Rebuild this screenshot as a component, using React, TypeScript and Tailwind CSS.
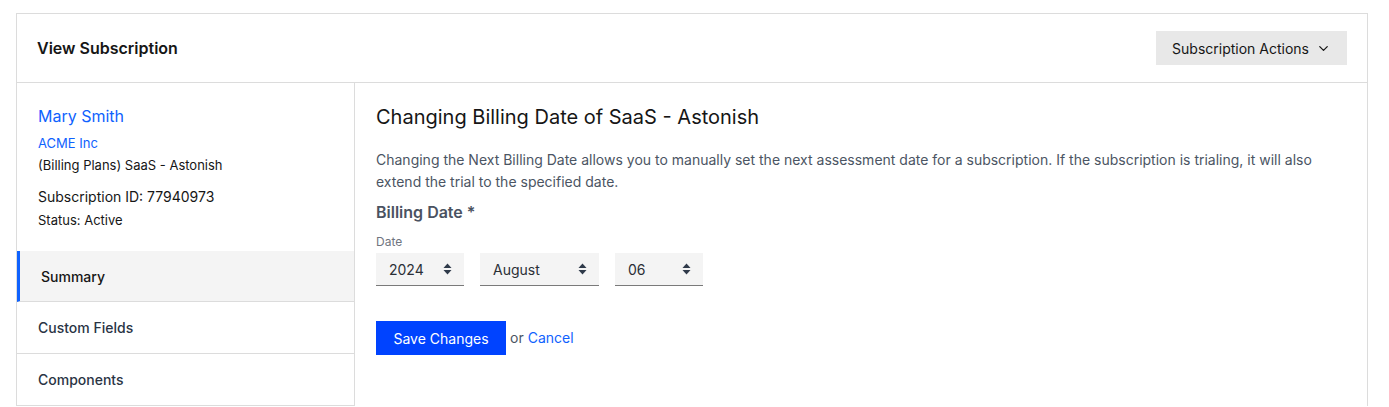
import { ChevronDown } from "lucide-react"

function SelectBox({ value, width }: { value: string; width: string }) {
  return (
    <div className={`flex h-[33px] items-center justify-between border-b border-[#7a7a7a] bg-[#f4f4f4] pl-[13px] pr-[12px] ${width}`}>
      <span className="text-[14px] text-[#2b2f36]">{value}</span>
      <svg width="9" height="12" viewBox="0 0 9 12" className="text-[#2f3a4a]">
        <path d="M4.5 0.5 L8.5 5 H0.5 Z" fill="currentColor" />
        <path d="M4.5 11.5 L8.5 7 H0.5 Z" fill="currentColor" />
      </svg>
    </div>
  )
}

export default function App() {
  const navItems = ["Summary", "Custom Fields", "Components"]

  return (
    <div className="min-h-[407px] bg-white pl-4 pr-[21px] pt-[13px]" style={{ fontFamily: "Inter, 'Noto Sans', sans-serif" }}>
      <div className="border border-b-0 border-[#dcdcdc]">
        {/* header */}
        <div className="flex h-[69px] items-center justify-between border-b border-[#dcdcdc] pl-[20px] pr-[20px]">
          <h1 className="text-[16px] font-semibold text-[#161616]">View Subscription</h1>
          <button className="flex h-[34px] items-center gap-[7px] bg-[#e8e8e8] pl-[16px] pr-[16px] text-[14px] text-[#161616]">
            Subscription Actions
            <ChevronDown className="h-[15px] w-[15px]" strokeWidth={2} />
          </button>
        </div>

        <div className="flex">
          {/* sidebar */}
          <div className="w-[338px] shrink-0 border-r border-[#dcdcdc]">
            <div className="pb-[21px] pl-[21px] pt-[21px]">
              <div className="text-[16px] leading-[24px] text-[#0f62fe]">Mary Smith</div>
              <div className="mt-[5px] text-[13px] leading-[20px] text-[#0f62fe]">ACME Inc</div>
              <div className="mt-[2px] text-[13px] leading-[20px] text-[#161616]">(Billing Plans) SaaS - Astonish</div>
              <div className="mt-[12px] text-[14px] leading-[20px] text-[#161616]">Subscription ID: 77940973</div>
              <div className="mt-[3px] text-[13px] leading-[20px] text-[#161616]">Status: Active</div>
            </div>
            {navItems.map((item, i) => (
              <div
                key={item}
                className={
                  i === 0
                    ? "flex h-[51px] items-center border-b border-l-[3px] border-b-[#dcdcdc] border-l-[#0f62fe] bg-[#f4f4f4] pl-[21px] text-[14px] font-medium text-[#161616]"
                    : "flex h-[52px] items-center border-b border-[#dcdcdc] pl-[21px] text-[14px] font-medium text-[#2a3444]"
                }
              >
                {item}
              </div>
            ))}
          </div>

          {/* main */}
          <div className="flex-1 pl-[21px] pr-[21px] pt-[21px]">
            <h2 className="text-[20px] leading-[26px] text-[#161616]">Changing Billing Date of SaaS - Astonish</h2>
            <p className="mt-[19px] text-[14px] leading-[22px] text-[#4b5563]">
              Changing the Next Billing Date allows you to manually set the next assessment date for a subscription. If the subscription is trialing, it will also extend the trial to the specified date.
            </p>
            <div className="mt-[9px] text-[16px] font-semibold leading-[20px] text-[#4a5261]">Billing Date *</div>
            <div className="mt-[13px] text-[12px] leading-[14px] text-[#6f7580]">Date</div>
            <div className="mt-[4px] flex gap-[16px]">
              <SelectBox value="2024" width="w-[88px]" />
              <SelectBox value="August" width="w-[119px]" />
              <SelectBox value="06" width="w-[88px]" />
            </div>
            <div className="mt-[35px] flex items-center gap-[4px]">
              <button className="h-[34px] w-[130px] bg-[#0043ff] text-[14px] text-white">Save Changes</button>
              <span className="-mt-[2px] text-[14px] text-[#4b5563]">or</span>
              <a className="-mt-[2px] text-[14px] text-[#0f62fe]">Cancel</a>
            </div>
          </div>
        </div>
      </div>
    </div>
  )
}
